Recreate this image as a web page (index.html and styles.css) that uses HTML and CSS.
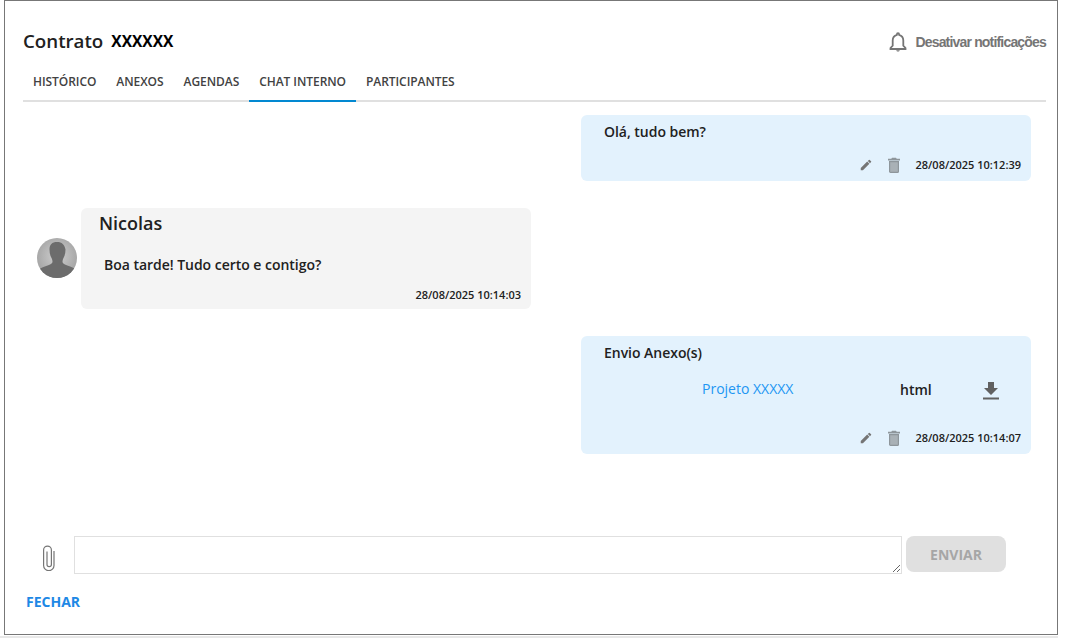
FILE: index.html
```html
<!DOCTYPE html>
<html lang="pt">
<head>
<meta charset="utf-8">
<title>Chat interno</title>
<link rel="stylesheet" href="styles.css">
</head>
<body>
<main class="dialog">
  <header class="top">
    <h1 class="title"><span>Contrato</span><span class="code">XXXXXX</span></h1>
    <div class="notify">
      <svg class="bell" viewBox="0 0 18 20" width="18" height="20"><path d="M9 1.200c-.7 0-1.100.5-1.100 1.200v.5C5.300 3.600 3.700 5.800 3.700 8.500v5.200L1.500 16v1h15v-1l-2.200-2.300V8.500c0-2.700-1.600-4.900-4.200-5.600v-.5c0-.7-.4-1.200-1.100-1.200z" fill="none" stroke="#757575" stroke-width="1.800"/><path d="M7.200 18.200c.2.800.9 1.300 1.800 1.300s1.600-.5 1.800-1.300z" fill="#757575"/></svg>
      <span>Desativar notificações</span>
    </div>
  </header>
  <nav class="tabs">
    <a class="tab">HISTÓRICO</a>
    <a class="tab">ANEXOS</a>
    <a class="tab">AGENDAS</a>
    <a class="tab active">CHAT INTERNO</a>
    <a class="tab">PARTICIPANTES</a>
  </nav>
  <section class="chat">
    <article class="bubble mine first">
      <p class="msg">Olá, tudo bem?</p>
      <div class="meta">
        <svg class="edit" viewBox="0 0 24 24" width="14" height="14"><path d="M3 17.250V21h3.750L17.810 9.940l-3.750-3.750L3 17.250zM20.710 7.040a1 1 0 0 0 0-1.410l-2.340-2.340a1 1 0 0 0-1.410 0l-1.830 1.830 3.750 3.750 1.830-1.830z"/></svg>
        <svg class="trash" viewBox="0 0 14 16" width="14" height="16"><path class="trash-lid" d="M5 .8h4l.7 1H13v1.700H1V1.800h3.300z"/><path class="trash-body" d="M2.600 4.600h8.800V14.400a1 1 0 0 1-1 1H3.600a1 1 0 0 1-1-1z"/></svg>
        <time>28/08/2025 10:12:39</time>
      </div>
    </article>
    <div class="incoming">
      <svg class="avatar" viewBox="0 0 40 40" width="40" height="40">
        <defs>
          <clipPath id="c"><circle cx="20" cy="20" r="20"/></clipPath>
          <radialGradient id="g" cx="50%" cy="45%" r="55%"><stop offset="0" stop-color="#cfcfcf"/><stop offset="1" stop-color="#a4a4a4"/></radialGradient>
        </defs>
        <circle cx="20" cy="20" r="20" fill="url(#g)"/>
        <g clip-path="url(#c)" fill="#6c6c6c"><path d="M20 4c-5 0-7.500 2.500-7.500 7.500 0 3 .5 5.500 1.500 7.500 1 2 1.500 3 1.500 5 0 1.500-3 3-7 4.200-4 1.200-6 2.800-8 4.800v7h40v-7c-2-2-4-3.600-8-4.800-4-1.200-7-2.700-7-4.200 0-2 .5-3 1.500-5 1-2 1.500-4.500 1.500-7.500C27.500 6.500 25 4 20 4z"/></g>
      </svg>
      <article class="bubble theirs">
        <h2 class="name">Nicolas</h2>
        <p class="msg">Boa tarde! Tudo certo e contigo?</p>
        <div class="meta"><time>28/08/2025 10:14:03</time></div>
      </article>
    </div>
    <article class="bubble mine attach">
      <p class="msg">Envio Anexo(s)</p>
      <div class="file">
        <a class="file-name">Projeto XXXXX</a>
        <span class="file-type">html</span>
        <svg class="download" viewBox="0 0 16 18" width="16" height="18"><path d="M5 0h6v6h4l-7 7-7-7h4zM0 15.500h16V17.500H0z"/></svg>
      </div>
      <div class="meta">
        <svg class="edit" viewBox="0 0 24 24" width="14" height="14"><path d="M3 17.250V21h3.750L17.810 9.940l-3.750-3.750L3 17.250zM20.710 7.040a1 1 0 0 0 0-1.410l-2.340-2.340a1 1 0 0 0-1.410 0l-1.830 1.830 3.750 3.750 1.830-1.830z"/></svg>
        <svg class="trash" viewBox="0 0 14 16" width="14" height="16"><path class="trash-lid" d="M5 .8h4l.7 1H13v1.700H1V1.800h3.300z"/><path class="trash-body" d="M2.600 4.600h8.800V14.400a1 1 0 0 1-1 1H3.600a1 1 0 0 1-1-1z"/></svg>
        <time>28/08/2025 10:14:07</time>
      </div>
    </article>
  </section>
  <form class="composer">
    <svg class="clip" viewBox="0 0 14 26" width="14" height="26"><path d="M5 6.500v13a2.200 2.200 0 0 0 4.400 0V5a3.900 3.900 0 0 0-7.800 0v15.500a5.200 5.200 0 0 0 10.400 0V6" fill="none" stroke="#757575" stroke-width="1.200"/></svg>
    <textarea class="input"></textarea>
    <button class="send" type="button" disabled>ENVIAR</button>
  </form>
  <a class="close">FECHAR</a>
</main>
<div class="edge"></div>
</body>
</html>
```
FILE: styles.css
```css
* { box-sizing: border-box; }
html, body { margin: 0; padding: 0; background: #fff; overflow: hidden; }
body { font-family: "Open Sans", sans-serif; color: #212121; height: 638px; }
.dialog {
  margin-left: 4px;
  width: 1054px;
  height: 635px;
  border: 1px solid #777;
  padding: 29px 11px 0 18px;
  display: flex;
  flex-direction: column;
}
.top { display: flex; justify-content: space-between; align-items: center; height: 24px; }
.title { margin: -2px 0 0; font-size: 18.72px; font-weight: 600; line-height: 24px; display: flex; gap: 8px; }
.code { font-weight: 700; color: #000; font-size: 15.5px; }
.notify { display: flex; align-items: center; gap: 8px; font-family: "Liberation Sans", sans-serif; font-size: 14px; color: #757575; font-weight: 700; letter-spacing: -.82px; }
.tabs { display: flex; margin-top: 11px; height: 37px; border-bottom: 2px solid #e0e0e0; }
.tab { padding: 0 10px; font-size: 12px; font-weight: 600; letter-spacing: -.06px; line-height: 33px; color: #424242; height: 37px; }
.active { border-bottom: 2px solid #0288d1; }
.chat { display: flex; flex-direction: column; padding-right: 15px; height: 434px; }
.bubble { border-radius: 6px; width: 450px; position: relative; display: flex; flex-direction: column; }
.mine { background: #e3f2fd; align-self: flex-end; padding: 7px 10px 0 23px; }
.first { margin-top: 13px; height: 66px; }
.attach { margin-top: 27px; height: 118px; }
.msg { margin: 0; font-size: 14px; font-weight: 600; letter-spacing: -.03px; line-height: 20px; color: #212121; }
.meta { margin-top: auto; height: 32px; display: flex; align-items: center; justify-content: flex-end; font-size: 11px; font-weight: 600; line-height: 16px; }
.edit { fill: #757575; margin-right: 14px; }
.trash { margin-right: 14px; }
.trash-lid { fill: #8e969b; }
.trash-body { fill: #a9b1b6; stroke: #8e969b; stroke-width: 1.200; }
.incoming { display: flex; align-items: flex-start; margin-top: 27px; margin-left: 14px; gap: 4px; }
.avatar { flex: none; margin-top: 30px; }
.theirs { background: #f4f4f4; height: 101px; padding: 0 10px 0 18px; }
.name { margin: 2px 0 0; font-size: 18px; font-weight: 600; line-height: 26px; }
.theirs .msg { margin: 19px 0 0 5px; }
.theirs .meta { height: 28px; margin-top: auto; }
.file { display: flex; align-items: center; height: 34px; margin-top: 9px; }
.file-name { margin-left: 98px; width: 198px; font-size: 14px; color: #2196f3; line-height: 20px; }
.file-type { width: 83px; font-size: 14px; font-weight: 600; color: #212121; }
.download { fill: #616161; margin-top: 3px; }
.composer { display: flex; align-items: flex-start; margin-left: 18px; gap: 4px; }
.clip { margin: 9px 14px 0 1px; flex: none; }
.input { width: 828px; height: 38px; border: 1px solid #e0e0e0; background: #fff; padding: 4px; margin: 0; border-radius: 0; font: 14px "Open Sans", sans-serif; }
.send { width: 100px; height: 36px; border: 0; border-radius: 8px; background: #e0e0e0; color: #a6a6a6; font: 700 14px "Open Sans", sans-serif; padding: 0; }
.close { margin: 18px 0 0 3px; font-size: 14px; font-weight: 700; color: #1e88e5; line-height: 20px; }
.edge { height: 2px; margin: 1px 0 0 0; background: #e8e8e8; width: 1058px; }
```
